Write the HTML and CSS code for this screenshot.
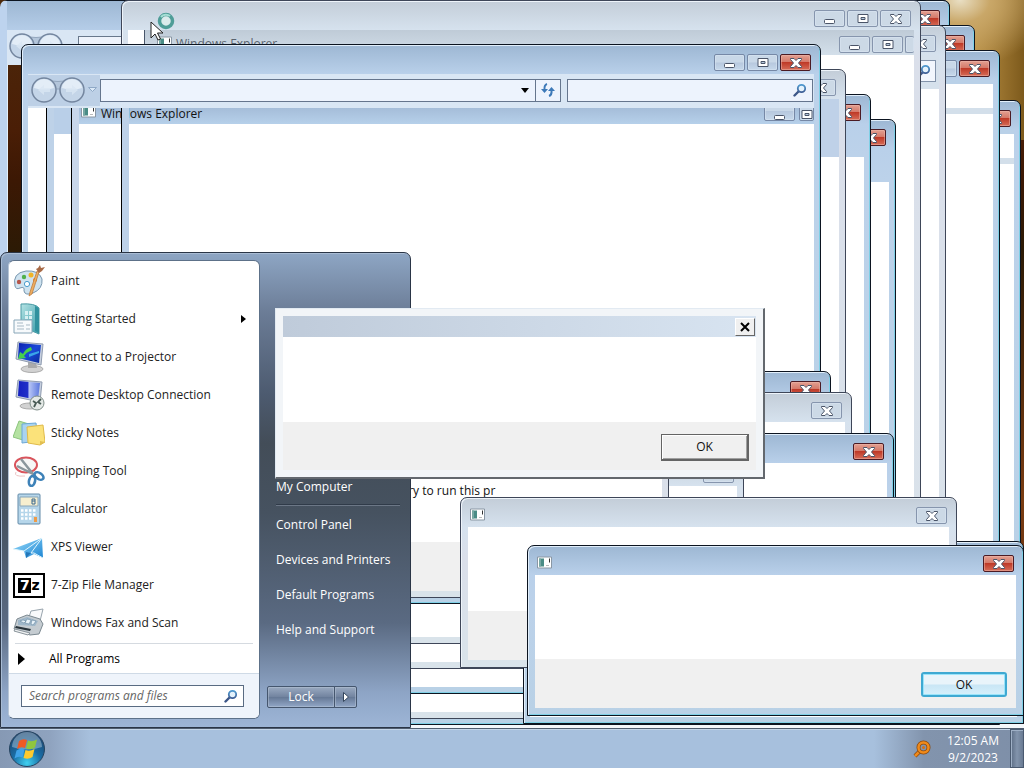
FILE: index.html
```html
<!DOCTYPE html>
<html lang="en">
<head>
<meta charset="utf-8">
<title>Desktop</title>
<link rel="stylesheet" href="styles.css">
</head>
<body>
<svg class="defs" aria-hidden="true">
  <defs>
    <linearGradient id="lens" x2="0" y2="1"><stop stop-color="#4f9ad0"/><stop offset="1" stop-color="#3f5f96"/></linearGradient>
    <linearGradient id="teal" x2="1" y2="1"><stop stop-color="#b5e3e4"/><stop offset="1" stop-color="#3a9eab"/></linearGradient>
    <linearGradient id="screen" x2="1" y2="1"><stop stop-color="#0a1fae"/><stop offset=".5" stop-color="#1a49d8"/><stop offset="1" stop-color="#0a2a9a"/></linearGradient>
    <linearGradient id="screen2" x2="1" y2="0"><stop stop-color="#1420c0"/><stop offset=".45" stop-color="#2030c8"/><stop offset=".5" stop-color="#b8c6f6"/><stop offset="1" stop-color="#5b77de"/></linearGradient>
    <linearGradient id="plane" x2="1" y2="1"><stop stop-color="#9adcfa"/><stop offset="1" stop-color="#1d86d4"/></linearGradient>
    <radialGradient id="orb" cy=".9" r=".9"><stop stop-color="#3fd0f0"/><stop offset=".45" stop-color="#1a6ea6"/><stop offset="1" stop-color="#1d4068"/></radialGradient>
  </defs>
  <symbol id="i-close" viewBox="0 0 14 12"><path d="M1.500 1.500h3.500l2 2 2-2h3.500v1L9.500 6l3 3.500v1H9l-2-2-2 2H1.500v-1l3-3.500-3-3.500z" fill="#fff" stroke="#4a5468"/></symbol>
  <symbol id="i-min" viewBox="0 0 14 12"><rect x="1.500" y="6.500" width="10" height="4" rx="1" fill="#fff" stroke="#4a5468"/></symbol>
  <symbol id="i-max" viewBox="0 0 14 12"><path d="M2 1.500h10v8H2z" fill="#fff" stroke="#4a5468"/><path d="M5 4.500h4v2H5z" fill="#b8cbe0" stroke="#4a5468"/></symbol>
  <symbol id="i-search" viewBox="0 0 14 14"><path d="M1.500 12.500 6 8" stroke="#3c5688" stroke-width="2.400" stroke-linecap="round"/><circle cx="8.500" cy="5.500" r="3.700" fill="#e4f2fc" stroke="url(#lens)" stroke-width="1.800"/></symbol>
  <symbol id="i-app" viewBox="0 0 15 12"><path d="M.5.500h14v11H.5z" fill="#fff" stroke="#8a97a4"/><path d="M2 2h5v8H2z" fill="#4a8c86"/><path d="M2 2h2v8H2z" fill="#78a8a4"/><path d="M12.500 2v4" stroke="#333"/><path d="M9 9h3" stroke="#bbb"/></symbol>
  <symbol id="i-nav" viewBox="0 0 56 28"><path d="M12 3q16 5 32 0v10H12z" fill="#b3c5da" stroke="#93a6bd"/><g stroke="#74869f" stroke-width="1.500" fill="#c4d5e8"><circle cx="14" cy="14" r="12"/><circle cx="42" cy="14" r="12"/></g><path d="M4 12a10 9 0 0 1 20 0q-10 3-20 0M32 12a10 9 0 0 1 20 0q-10 3-20 0" fill="#e3edf7"/><path d="m8 14 6-5v3h6v4h-6v3zM48 14l-6-5v3h-6v4h6v3z" fill="#d9e6f2" opacity=".8"/></symbol>
</svg>

<main class="desktop">
  <section class="win active w-a" aria-label="Explorer">
    <header class="bar"></header>
    <div class="mini-nav"><svg class="nav-ico"><use href="#i-nav"/></svg><span class="mini-address"></span></div>
  </section>
  <section class="win active w-d" aria-label="Window">
    <header class="bar"><button class="cap close" aria-label="Close"><svg><use href="#i-close"/></svg></button></header>
    <div class="body split"></div>
  </section>
  <section class="win active w-top1" aria-label="Window"><header class="bar"><button class="cap close" aria-label="Close"><svg><use href="#i-close"/></svg></button></header><div class="body"></div></section>
  <section class="win active w-top2" aria-label="Window"><header class="bar"><button class="cap close" aria-label="Close"><svg><use href="#i-close"/></svg></button></header><div class="body"></div></section>
  <section class="win active w-c" aria-label="Window">
    <header class="bar"><button class="cap" aria-label="Maximize"></button><button class="cap close" aria-label="Close"><svg><use href="#i-close"/></svg></button></header>
    <div class="body split"></div>
  </section>
  <section class="win idle w-e" aria-label="Window">
    <header class="bar"><button class="cap" aria-label="Close"><svg><use href="#i-close"/></svg></button></header>
    <div class="nav-strip"><span class="find"><svg class="s14"><use href="#i-search"/></svg></span></div>
    <div class="body"></div>
  </section>
  <section class="win idle w-f" aria-label="Windows Explorer">
    <header class="bar">
      <button class="cap" aria-label="Minimize"><svg><use href="#i-min"/></svg></button><button class="cap" aria-label="Maximize"><svg><use href="#i-max"/></svg></button><button class="cap" aria-label="Close"><svg><use href="#i-close"/></svg></button>
    </header>
    <div class="inner-bar">
      <span class="inner-edge"></span><svg class="app"><use href="#i-app"/></svg><span class="caption">Windows Explorer</span>
      <button class="cap" aria-label="Minimize"><svg><use href="#i-min"/></svg></button><button class="cap" aria-label="Maximize"><svg><use href="#i-max"/></svg></button><button class="cap cut" aria-label="Close"></button>
    </div>
    <div class="body"></div>
  </section>
  <section class="win active w-g" aria-label="Window">
    <header class="bar"><button class="cap close" aria-label="Close"><svg><use href="#i-close"/></svg></button></header>
    <div class="band"></div><div class="body"></div>
  </section>
  <section class="win active w-h" aria-label="Window">
    <header class="bar"><button class="cap close" aria-label="Close"><svg><use href="#i-close"/></svg></button></header>
    <div class="band"></div><div class="body"></div>
  </section>
  <section class="win idle w-x" aria-label="Window"><header class="bar"></header><div class="body"></div></section>
  <section class="win idle w-i" aria-label="Window">
    <header class="bar"><button class="cap" aria-label="Close"><svg><use href="#i-close"/></svg></button></header>
    <div class="band tall"></div><div class="body"></div>
  </section>

  <section class="win active w-j" aria-label="Explorer">
    <header class="bar">
      <button class="cap" aria-label="Minimize"><svg><use href="#i-min"/></svg></button><button class="cap" aria-label="Maximize"><svg><use href="#i-max"/></svg></button><button class="cap close" aria-label="Close"><svg><use href="#i-close"/></svg></button>
    </header>
    <div class="toolbar">
      <button class="nav-btn" aria-label="Back and forward"><svg class="nav-ico"><use href="#i-nav"/></svg><svg class="nav-drop" viewBox="0 0 9 6"><path d="M.5.500h8l-4 4z" fill="#dbe9f7" stroke="#8fa9c6"/></svg></button>
      <div class="address">
        <input type="text" aria-label="Address">
        <button aria-label="Previous locations"><svg class="drop" viewBox="0 0 8 5"><path d="M0 0h8L4 5z"/></svg></button>
        <button class="refresh" aria-label="Refresh"><svg class="s14" viewBox="0 0 14 14"><path d="M6 1Q3 2 3.500 7M8 13q3-1 2.500-6" fill="none" stroke="#3d79b8" stroke-width="2"/><path d="M0 6h7l-3.500 4zM7 8h7l-3.500-4z" fill="#3d79b8"/></svg></button>
      </div>
      <div class="search"><input type="search" aria-label="Search"><svg class="s14"><use href="#i-search"/></svg></div>
    </div>
    <div class="ghosts">
      <div class="ghost-1"></div>
      <div class="ghost-2"></div>
      <div class="ghost-3">
        <div class="ghost-bar"><svg class="app"><use href="#i-app"/></svg><span class="caption">Windows Explorer</span><button class="cap" aria-label="Minimize"><svg><use href="#i-min"/></svg></button><button class="cap half" aria-label="Maximize"><svg><use href="#i-max"/></svg></button></div>
        <div class="body"></div>
        <span class="ghost-edge"></span>
      </div>
    </div>
  </section>

  <section class="win active w-k" aria-label="Message"><header class="bar"><button class="cap close" aria-label="Close"><svg><use href="#i-close"/></svg></button></header><div class="body"></div></section>
  <section class="win idle w-l" aria-label="Message"><header class="bar"><button class="cap" aria-label="Close"><svg><use href="#i-close"/></svg></button></header><div class="body"></div></section>
  <section class="win active w-m" aria-label="Message"><header class="bar"><button class="cap close" aria-label="Close"><svg><use href="#i-close"/></svg></button></header><div class="body"></div></section>
  <section class="win idle w-n" aria-label="Message"><header class="bar"><button class="cap" aria-label="Close"></button></header><div class="body"></div></section>
  <section class="win idle w-o" aria-label="Message"><header class="bar"></header><div class="body"><p class="message">ory to run this pr</p></div><footer class="foot"></footer></section>

  <section class="win active w-q2" aria-label="Message"><header class="bar"></header><div class="body"></div></section>
  <section class="win idle w-p" aria-label="Message">
    <header class="bar"><svg class="app"><use href="#i-app"/></svg><button class="cap" aria-label="Close"><svg><use href="#i-close"/></svg></button></header>
    <div class="body"></div><footer class="foot"></footer>
  </section>
  <section class="win active w-q" aria-label="Message">
    <header class="bar"><svg class="app"><use href="#i-app"/></svg><button class="cap close" aria-label="Close"><svg><use href="#i-close"/></svg></button></header>
    <div class="body"></div><footer class="foot"><button class="ok-aero">OK</button></footer>
  </section>

  <nav class="start" aria-label="Start menu">
    <div class="pane">
      <ul class="programs">
        <li><a href="#paint"><svg viewBox="0 0 32 32"><path d="M2 21Q-1 8 13 6q13-1 16 8 1 10-9 14-8 3-9-2 1-5-4-3-4 2-5-2z" fill="#cfe3f0" stroke="#7795ad"/><circle cx="6" cy="17" r="2.200" fill="#b5564a"/><circle cx="11" cy="12" r="2.200" fill="#4fb04b"/><circle cx="18" cy="10" r="2.500" fill="#f0b428"/><circle cx="14" cy="19" r="2.600" fill="#fff" stroke="#4a9ccc"/><circle cx="22" cy="15" r="2" fill="#e98030"/><path d="M26 7 19 29l-3 2 1-4 7-21z" fill="#eeae62" stroke="#b77434" stroke-width=".7"/><path d="m23 4 2-1 2-3 1 3 4-1-3 4-3 2z" fill="#a86a46"/></svg>Paint</a></li>
        <li><a href="#started"><svg viewBox="0 0 32 32"><path d="M8 1q14-1 18 4v26l-7-3H8z" fill="url(#teal)" stroke="#4a9aa4"/><path d="M22 3q4 1 4 4v23l-4-2z" fill="#30919e"/><path d="M12 8h3v4h-3zM16 8h3v4h-3zM12 13h3v3h-3zM16 13h3v3h-3z" fill="#d8f0f2"/><path d="M1 17h18v13H1z" fill="#f7fafc" stroke="#88a6b8"/><path d="M4 20h6M4 23h7M4 26h7M13 22h4M13 26h4" stroke="#a7b9c5"/></svg>Getting Started<span class="more"></span></a></li>
        <li><a href="#projector"><svg viewBox="0 0 32 32"><ellipse cx="19" cy="28" rx="11" ry="3.500" fill="#d2d2d2" stroke="#aaa"/><path d="M15 21h8l1 6h-9z" fill="#aaa"/><path d="m5 1 25 2-2 21L3 18z" fill="#c8d1e0" stroke="#8f9bb0"/><path d="m6 2 22 2-2 18L5 17z" fill="url(#screen)"/><path d="M18 6q-6 2-8 7l-3-2-2 7 8-1-2-2q3-4 8-6z" fill="#45d04c"/><path d="m16 13 10-3v2l-10 4z" fill="#39a5e8"/></svg>Connect to a Projector</a></li>
        <li><a href="#remote"><svg viewBox="0 0 32 32"><ellipse cx="17" cy="27" rx="10" ry="3" fill="#d2d2d2" stroke="#aaa"/><path d="m5 1 24 2-2 20-24-5z" fill="#c8d1e0" stroke="#8f9bb0"/><path d="m6 2 21 2-2 17-20-4z" fill="url(#screen2)"/><circle cx="24" cy="24" r="7" fill="#e4e9e6" stroke="#7f8d88"/><path d="m20 22 3 2-2 4M28 20l-3 3 3 2" fill="none" stroke="#475a54" stroke-width="1.800"/></svg>Remote Desktop Connection</a></li>
        <li><a href="#sticky"><svg viewBox="0 0 32 32"><path d="m6 4 13 4-6 16L0 20z" fill="#b5e2a2" stroke="#8cc47d"/><path d="m9 7 14-1 2 18-16 2z" fill="#a9d3f0" stroke="#6ca8d6"/><path d="m14 10 16-2 2 17-5 3-12-2z" fill="#fbe27a" stroke="#dfba4a"/><path d="m27 28 5-3-5-1z" fill="#e2bf52"/></svg>Sticky Notes</a></li>
        <li><a href="#snip"><svg viewBox="0 0 32 32"><ellipse cx="13" cy="10" rx="11" ry="7.500" fill="#f6f6f6" stroke="#d9545c" stroke-width="2"/><path d="m8 4 12 15M4 11l18 9" stroke="#8b979d" stroke-width="2.500"/><path d="M3 17q-3 5 9 4" fill="none" stroke="#ecc3c3"/><ellipse cx="26" cy="21" rx="5" ry="3" transform="rotate(35 26 21)" fill="none" stroke="#3e82b8" stroke-width="2.600"/><ellipse cx="19" cy="26" rx="3" ry="5" transform="rotate(12 19 26)" fill="none" stroke="#3e82b8" stroke-width="2.600"/></svg>Snipping Tool</a></li>
        <li><a href="#calc"><svg viewBox="0 0 32 32"><rect x="5" y="1" width="22" height="30" rx="1" fill="#b6d6ea" stroke="#628aa8"/><path d="M7 4h18v9H7z" fill="#f7efcf" stroke="#87a5b9"/><path d="M19 6h3v5h-3zM19 8h3" fill="none" stroke="#38678c"/><path d="M8 17.500h16M8 21.500h16M8 25.500h11" stroke="#fff" stroke-width="2.500" stroke-dasharray="2.500 1.500"/><path d="M21 24h3v5h-3z" fill="#ef9a46"/></svg>Calculator</a></li>
        <li><a href="#xps"><svg viewBox="0 0 32 32"><path d="M0 18 29 7l1 20-9-4-8 4-2-7z" fill="url(#plane)"/><path d="M11 20 29 7 18 22l3 0 9 5M0 18l11 2" fill="none" stroke="#e0f5fd"/><path d="m13 27 5-5-5-1z" fill="#2477b9"/></svg>XPS Viewer</a></li>
        <li><a href="#sevenzip"><span class="zip"><b>7</b><i>z</i></span>7-Zip File Manager</a></li>
        <li><a href="#fax"><svg viewBox="0 0 32 32"><path d="m18 4 12-2-4 16-11-5z" fill="#f9fafb" stroke="#98a4ad"/><path d="m4 12 10-4 13 4 3 5-4 10-9 1-16-6z" fill="#c5ccd1" stroke="#7c8991"/><path d="m5 13 9-3 11 4-3 5-17-1z" fill="#9fb7c9"/><path d="m7 14 3-1 3 1-2 2zM14 12l4 1-2 4-4-1zM19 13l4 1-3 4-2-1z" fill="#e9f3f9" stroke="#5a7d97" stroke-width=".5"/><path d="m3 19 15 3-1 2-15-3z" fill="#29343b"/><path d="m2 22 15 4-2 2-14-4z" fill="#eef0f1" stroke="#8a949b"/></svg>Windows Fax and Scan</a></li>
      </ul>
      <a class="all" href="#all"><span class="more"></span>All Programs</a>
      <form class="find-row"><label class="find-box"><input type="text" placeholder="Search programs and files" aria-label="Search programs and files"><svg class="s14"><use href="#i-search"/></svg></label></form>
    </div>
    <div class="places">
      <a href="#computer">My Computer</a>
      <hr>
      <a href="#control">Control Panel</a>
      <a href="#devices">Devices and Printers</a>
      <a href="#defaults">Default Programs</a>
      <a href="#help">Help and Support</a>
      <div class="power"><button>Lock</button><button class="opts" aria-label="Power options"><svg class="tri" viewBox="0 0 6 10"><path d="m.5.500 5 4.500-5 4.500z" fill="#fff" stroke="#35465c"/></svg></button></div>
    </div>
  </nav>

  <section class="classic" aria-label="Message">
    <header><button class="x-classic" aria-label="Close"><svg viewBox="0 0 10 10"><path d="m1 1 8 8M9 1 1 9" stroke="#000" stroke-width="2"/></svg></button></header>
    <div class="classic-body"></div>
    <footer><button class="ok-classic">OK</button></footer>
  </section>

  <svg class="pointer" viewBox="0 0 28 30"><circle cx="16" cy="9" r="6.500" fill="#dcebec" stroke="#4f9d98" stroke-width="3.500"/><path d="M11 5a6.500 6.500 0 0 1 9-1" fill="none" stroke="#a6ded4" stroke-width="2"/><path d="M1 10v16l4-4 3 6 2.500-1-3-6H13z" fill="#fff" stroke="#222"/></svg>
</main>

<footer class="taskbar">
  <button class="start-orb" aria-label="Start"><svg viewBox="0 0 38 38"><circle cx="19" cy="19" r="17.500" fill="url(#orb)" stroke="#25435f"/><path d="M4 17a15 15 0 0 1 30 0q-15 5-30 0" fill="#cfe4ef" opacity=".4"/><path d="M11 11q4-3 8-1l-2 8q-4-2-8 1z" fill="#ee5a24"/><path d="M20 10.500q4 2 9-1l-2 8q-4 3-9 1z" fill="#8fc63f"/><path d="M8.500 20.500q4-3 8-1l-2 8q-4-2-8 1z" fill="#3fa3e8"/><path d="M17.500 20q4 2 9-1l-2 8q-4 3-9 1z" fill="#fdca2e"/></svg></button>
  <div class="tray">
    <svg class="tray-ico" viewBox="0 0 18 18"><path d="m2 16 5-5" stroke="#8a4a10" stroke-width="4"/><path d="m2 16 5-5" stroke="#f08a1a" stroke-width="2.500"/><circle cx="10.500" cy="7.500" r="5" fill="none" stroke="#8a4a10" stroke-width="4"/><circle cx="10.500" cy="7.500" r="5" fill="none" stroke="#f08a1a" stroke-width="2.500"/><circle cx="10.500" cy="7.500" r="1.500" fill="#d9720f"/></svg>
    <time>12:05 AM<br>9/2/2023</time>
  </div>
  <button class="peek" aria-label="Show desktop"></button>
</footer>
</body>
</html>
```
FILE: styles.css
```css
* { box-sizing: border-box; }
body {
  margin: 0; height: 100vh; overflow: hidden;
  display: flex; flex-direction: column;
  font: 12px/16px "Open Sans", "Noto Sans", sans-serif; color: #111;
}
button, input { font: inherit; color: inherit; margin: 0; padding: 0; }
a { color: inherit; text-decoration: none; }
svg { flex: none; display: block; }
.defs { position: absolute; width: 0; height: 0; }
.desktop {
  flex: 1; min-height: 0; position: relative;
  background:
    linear-gradient(#f4f7fb, #f4f7fb) 0 100% / 100% 4px no-repeat,
    radial-gradient(ellipse at 960px 0, #e9dfc4 0, #c9a768 30px, transparent 90px),
    linear-gradient(to right, transparent 900px, #b8893c 930px, #b98f43 975px, #7d5a1c 1024px) 0 0 / 100% 140px no-repeat,
    linear-gradient(to bottom, #4d2a0c, #4a1e06 130px, #3c1804 180px, #2c1a05 250px, #7a3c12 500px, #4d2208);
}

/* Windows */
.win {
  position: absolute; display: flex; flex-direction: column;
  border: 1px solid #3e4658; border-radius: 7px 7px 0 0;
  padding: 0 6px 6px; overflow: hidden;
}
.active {
  border-color: #0c1420;
  background: linear-gradient(#9db7d3, #b9d0ea 29px, #bcd2ea 60px, #b9d1e6);
  box-shadow: inset 1px 1px #e2effb, inset -1px -1px #7fd0e6;
}
.idle {
  background: linear-gradient(#c3cdd8, #d6e2ee 29px, #dadfea 60px, #d9e3ea);
  box-shadow: inset 1px 1px #eef4fa;
}
.bar { flex: none; height: 29px; padding: 9px 3px 0 1px; display: flex; justify-content: flex-end; gap: 2px; align-items: flex-start; }
.bar .app { margin: 1px auto 0 0; }
.app { width: 15px; height: 13px; }
.cap {
  flex: none; width: 31px; height: 17px; display: flex; align-items: center; justify-content: center;
  border: 1px solid #7688a6; border-radius: 2px;
  background: linear-gradient(#c9d8e8 48%, #b7c8de 52%, #c6d8eb); box-shadow: inset 0 0 0 1px #dbe8f480;
}
.idle .cap { background: #ccd9e6; border-color: #8695ad; }
.cap svg { width: 14px; height: 12px; }
.cap.close { border-color: #4b1b24; background: linear-gradient(#e3a092 0, #d57a6a 45%, #bf3a28 50%, #d66c58); box-shadow: inset 0 0 0 1px #eeb8ac80; }
.body { flex: 1; background: #fff; }
.foot { flex: none; background: #f0f0f0; height: 49px; display: flex; justify-content: flex-end; }
.band { flex: none; height: 33px; }
.band.tall { height: 58px; background: #bfd1e8; }
.split { border-top: 4px solid #bad1e8; background: linear-gradient(#fff 24px, #d3dfea 24px, #d3dfea 30px, #fff 30px); }

.w-a { left: 0; top: 0; width: 950px; height: 600px; background: none; }
.w-a .bar { margin: 0 -6px; background: linear-gradient(#9db7d3, #b5cde8); }
.w-a { border-left: 7px solid #bdd3ee; padding-left: 0; }
.mini-nav { flex: none; height: 35px; display: flex; align-items: center; gap: 14px; padding-left: 1px; background: #d9e6f4; }
.mini-nav .nav-ico { margin-top: -4px; }
.mini-address { flex: 1; height: 23px; border: 1px solid #68788c; background: #eef3fb; }
.w-d { left: 200px; top: 100px; width: 821px; height: 600px; }
.w-top1 { left: 150px; top: 0; width: 800px; height: 300px; }
.w-top2 { left: 150px; top: 25px; width: 825px; height: 500px; }
.w-c { left: 150px; top: 50px; width: 850px; height: 675px; }
.w-e { left: 140px; top: 25px; width: 806px; height: 690px; }
.w-f { left: 121px; top: 0; width: 800px; height: 719px; }
.w-g { left: 140px; top: 119px; width: 756px; height: 560px; }
.w-h { left: 130px; top: 94px; width: 741px; height: 600px; }
.w-x { left: 120px; top: 200px; width: 700px; height: 469px; }
.w-i { left: 110px; top: 69px; width: 736px; height: 575px; }
.w-j { left: 21px; top: 44px; width: 800px; height: 560px; }
.w-k { left: 400px; top: 371px; width: 431px; height: 180px; }
.w-l { left: 420px; top: 392px; width: 432px; height: 180px; }
.w-m { left: 440px; top: 433px; width: 454px; height: 150px; }
.w-n { left: 500px; top: 456px; width: 244px; height: 130px; }
.w-o { left: 340px; top: 400px; width: 329px; height: 198px; }
.w-p { left: 460px; top: 497px; width: 497px; height: 171px; }
.w-q2 { left: 523px; top: 541px; width: 501px; height: 183px; }
.w-q { left: 527px; top: 545px; width: 497px; height: 171px; }
.w-p, .w-q { padding: 0 7px 7px; }
.w-p .bar, .w-q .bar { padding-left: 2px; padding-right: 2px; }

.nav-strip { flex: none; height: 34px; padding: 5px 3px 0; background: #d6e1ec; }
.find { display: flex; justify-content: flex-end; align-items: center; height: 22px; padding-right: 4px; border: 1px solid #8393aa; background: #f2f6fd; }
.s14 { width: 14px; height: 14px; }
.inner-bar { flex: none; height: 25px; display: flex; gap: 2px; align-items: flex-start; padding-top: 6px; background: linear-gradient(#bfcbd7, #d3dfea); overflow: hidden; }
.inner-edge { width: 17px; height: 25px; margin: -6px 10px 0 0; background: #fff; border-right: 1px solid #49566a; }
.inner-bar .caption { flex: 1; color: #59636e; margin-left: 2px; }
.inner-bar .cut { width: 9px; border-right: 0; }

.toolbar { flex: none; height: 34px; display: flex; align-items: center; gap: 6px; padding: 0 1px 2px 0; background: #d9e6f4; }
.nav-btn { width: 72px; height: 31px; margin-right: -6px; padding-left: 2px; display: flex; align-items: center; gap: 2px; border: 0; background: #bdd0e6; }
.nav-ico { width: 56px; height: 28px; }
.nav-drop { width: 9px; height: 6px; }
.address { flex: 464; min-width: 0; height: 23px; display: flex; border: 1px solid #65758d; background: #edf3fd; }
.address input, .search input { flex: 1; min-width: 0; border: 0; outline: 0; background: none; }
.address button { width: 20px; border: 0; background: none; display: grid; place-items: center; }
.address .refresh { width: 25px; border-left: 1px solid #65758d; }
.drop { width: 8px; height: 5px; }
.search { flex: 242; min-width: 0; height: 23px; display: flex; align-items: center; padding-right: 5px; border: 1px solid #65758d; background: #edf3fd; }
.ghosts { flex: 1; display: flex; min-height: 0; }
.ghost-1 { width: 19px; background: #fff; border-right: 1px solid #000; }
.ghost-2 { width: 25px; border-right: 1px solid #000; border-left: 7px solid #bed2e8; background: linear-gradient(#b9cfe8 26px, #fff 26px); }
.ghost-3 { flex: 1; min-width: 0; position: relative; display: flex; flex-direction: column; padding-left: 7px; background: #c8d6ea; }
.ghost-bar { flex: none; height: 16px; display: flex; align-items: flex-end; gap: 4px; padding-left: 2px; background: linear-gradient(#a5bdd9, #b6d0ea); overflow: hidden; }
.ghost-bar .app { align-self: flex-start; margin-top: -3px; }
.ghost-bar .caption { flex: 1; height: 18px; margin-left: 1px; }
.ghost-bar .cap { height: 20px; margin: 0 0 3px; padding-top: 8px; }
.ghost-bar .half { width: 15px; }
.ghost-edge { position: absolute; left: 49px; top: 0; bottom: 0; width: 8px; border-left: 1px solid #000; background: #bdd1e8; }

.w-o .body { padding: 53px 0 0 54px; }
.message { margin: 0; white-space: nowrap; }
.w-q .foot { padding: 13px 9px 0 0; }
.ok-aero { width: 86px; height: 25px; border: 2px solid #3fa9d2; border-radius: 3px; background: linear-gradient(#e9f4fa 48%, #c9e6f5 52%, #d6f0fb); box-shadow: inset 0 0 0 1px #9be4fa; line-height: 20px; }

/* Start menu */
.start {
  position: absolute; left: 0; bottom: 0; width: 411px; height: 476px; display: flex; padding: 7px 8px 8px 7px;
  border: 1px solid #2a3546; border-radius: 7px 7px 0 0;
  background: linear-gradient(#8ea6c4, #6b7c96 60px, #4d5b70 140px, #434d58 190px, #465260 260px, #5a6a82 370px, #8ea5c6 440px, #9db5d6);
  box-shadow: inset 1px 1px #a9bcd4;
}
.pane { flex: none; width: 252px; display: flex; flex-direction: column; background: #fff; border-radius: 6px; border: 1px solid #5d7189; border-left-color: #b6c5d6; overflow: hidden; color: #222; }
.programs { list-style: none; margin: 0; padding: 1px 6px 0 4px; }
.programs a { height: 38px; display: flex; align-items: center; gap: 6px; }
.programs svg { width: 32px; height: 32px; }
.more { border: 4px solid transparent; border-left: 5px solid #000; border-right: 0; margin: 0 7px 0 auto; }
.all { flex: 1; display: flex; align-items: center; gap: 24px; margin: 1px 6px 0; padding-left: 3px; border-top: 1px solid #d5dae0; color: #000; }
.all .more { border-width: 6px; border-left-width: 7px; border-right-width: 0; margin: 0; }
.find-row { height: 45px; display: flex; align-items: center; padding: 0 15px 0 12px; background: #eff4fb; border-top: 1px solid #cfdae6; }
.find-box { flex: 1; height: 22px; display: flex; align-items: center; border: 1px solid #596b82; background: #fff; padding: 0 5px 0 7px; }
.find-box input { flex: 1; min-width: 0; border: 0; outline: 0; background: none; font-style: italic; }
.find-box input::placeholder { color: #666; opacity: 1; }
.zip { width: 32px; height: 25px; display: flex; align-items: center; justify-content: center; border: 2px solid #000; font: bold 14px/15px "DejaVu Sans", sans-serif; }
.zip b { background: #000; color: #fff; width: 13px; text-align: center; }
.zip i { font-style: normal; color: #000; }
.places { flex: 1; display: flex; flex-direction: column; padding: 209px 2px 0 16px; color: #fff; }
.places a { height: 35px; display: flex; align-items: center; }
.places hr { width: 100%; margin: 0 0 1px; border: 0; border-top: 1px solid #303b49; border-bottom: 1px solid #6c7786; }
.power { display: flex; width: 90px; height: 22px; margin: auto 0 11px -9px; }
.power button { flex: 1; border: 1px solid #45566e; border-radius: 2px 0 0 2px; background: linear-gradient(#9aaac1, #71839f 50%, #667996 52%, #92a7c7); box-shadow: inset 0 0 0 1px #b5c3d680; color: #fff; }
.power .opts { flex: none; width: 23px; margin-left: -1px; border-radius: 0 2px 2px 0; display: grid; place-items: center; }
.tri { width: 6px; height: 10px; }

/* Classic dialog */
.classic { position: absolute; left: 275px; top: 308px; width: 490px; height: 171px; padding: 7px; display: flex; flex-direction: column; background: #f2f5f8; border: 1px solid #e2eaf2; border-right: 2px solid #63686e; border-bottom: 2px solid #63686e; }
.classic header { height: 21px; display: flex; justify-content: flex-end; align-items: center; padding-right: 1px; background: linear-gradient(to right, #bfcbda, #d8e4f1); }
.x-classic { width: 20px; height: 18px; display: grid; place-items: center; border: 1px solid #fff; border-right-color: #666; border-bottom-color: #666; background: #f0f0f0; }
.x-classic svg { width: 10px; height: 10px; }
.classic-body { flex: 1; background: #fff; }
.classic footer { height: 48px; padding: 12px 7px 0 0; display: flex; justify-content: flex-end; background: #f0f0f0; }
.ok-classic { width: 88px; height: 27px; border: 1px solid #646464; border-right-width: 2px; border-bottom-width: 2px; background: #f0f0f0; box-shadow: inset 1px 1px #fff, inset -1px -1px #a0a0a0; }
.pointer { position: absolute; left: 150px; top: 12px; width: 28px; height: 30px; }

/* Taskbar */
.taskbar {
  flex: none; position: relative; height: 40px; display: flex; align-items: center; padding-left: 8px; color: #fff;
  border-top: 1px solid #4f5d70; box-shadow: inset 0 1px #c5d6e9;
  background: linear-gradient(to right, #8699b4, #8fa3bf 50px, #a7c0dd 90px, #a7c0dd calc(100% - 150px), #8294ad calc(100% - 100px), #7e8fa8);
}
.start-orb { width: 38px; height: 38px; border: 0; background: none; }
.start-orb svg { width: 38px; height: 38px; }
.tray { margin-left: auto; display: flex; align-items: center; gap: 16px; }
.tray-ico { width: 18px; height: 18px; }
.tray time { text-align: center; line-height: 17px; }
.peek { align-self: stretch; width: 14px; margin-left: 11px; border: 1px solid #4a5a70; background: linear-gradient(to right, #5d6e86, #8294ac 50%, #6a7b93); box-shadow: inset 1px 1px #9fb0c6; }
```
